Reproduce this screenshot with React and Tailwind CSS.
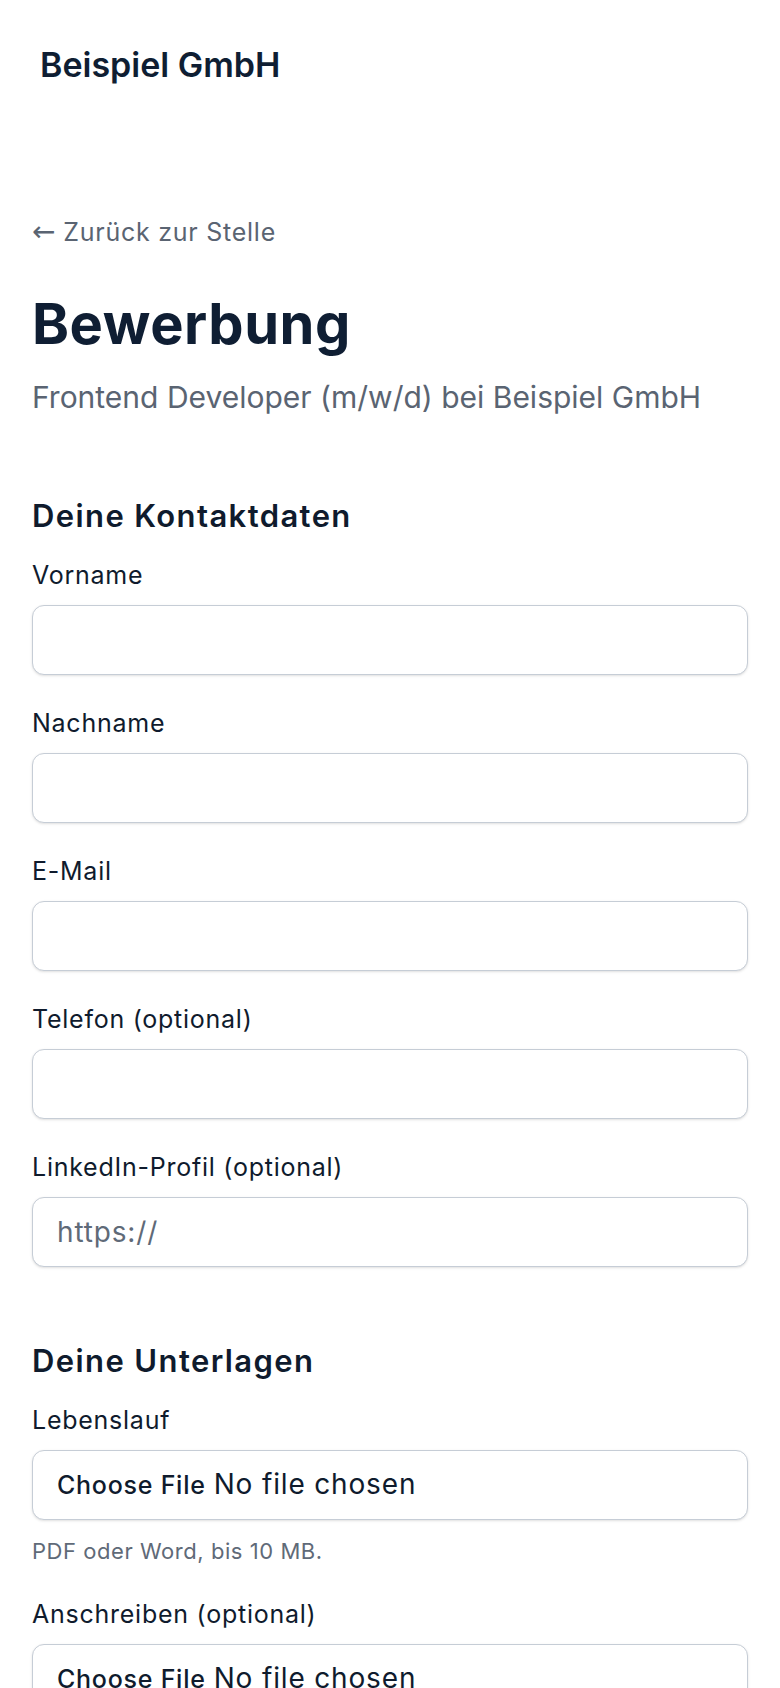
import React from "react";

const FIELDS = [
  { id: "vorname", label: "Vorname", type: "text" },
  { id: "nachname", label: "Nachname", type: "text" },
  { id: "email", label: "E-Mail", type: "email" },
  { id: "telefon", label: "Telefon (optional)", type: "tel" },
  { id: "linkedin", label: "LinkedIn-Profil (optional)", type: "url", placeholder: "https://" },
];

function Field({ id, label, type, placeholder }) {
  return (
    <div className="flex flex-col">
      <label htmlFor={id} className="text-[25px] leading-[36px] tracking-[0.03em] text-[#0f1b2d]">
        {label}
      </label>
      <input
        id={id}
        type={type}
        placeholder={placeholder}
        className="mt-3 h-[70px] w-full rounded-[12px] border-[1.5px] border-[#c6cdd6] bg-white px-6 text-[28px] tracking-[0.03em] text-[#0f1b2d] shadow-sm placeholder:text-[#5f6a78] outline-none"
      />
    </div>
  );
}

function FileField({ id, label, hint }) {
  return (
    <div className="flex flex-col">
      <label htmlFor={id} className="text-[25px] leading-[36px] tracking-[0.03em] text-[#0f1b2d]">
        {label}
      </label>
      <input
        id={id}
        type="file"
        className="mt-3 h-[70px] w-full rounded-[12px] border-[1.5px] border-[#c6cdd6] bg-white px-6 py-[15px] text-[28px] leading-[37px] tracking-[0.03em] text-[#0f1b2d] shadow-sm file:mr-2 file:text-[25px] file:font-medium file:tracking-[0.03em] file:text-[#0f1b2d]"
      />
      {hint && (
        <p className="mt-4 text-[22px] leading-[30px] tracking-[0.025em] text-[#5f6a78]">{hint}</p>
      )}
    </div>
  );
}

export default function App() {
  return (
    <div className="min-h-screen bg-white font-['Inter',sans-serif] text-[#0f1b2d]">
      <header className="flex h-[130px] items-center px-10">
        <span className="text-[34px] font-semibold leading-[40px] text-[#0f1e33]">
          Beispiel GmbH
        </span>
      </header>

      <main className="px-8 pt-[84px] pb-16">
        <a href="#" className="block text-[25px] leading-[36px] tracking-[0.03em] text-[#5a6472]">
          <span className="font-['DejaVu_Sans',sans-serif] text-[28px] leading-none tracking-normal">←</span>{" "}
          Zurück zur Stelle
        </a>
        <h1 className="mt-[46px] text-[56px] font-bold leading-none tracking-[0.01em] text-[#0f1e33]">
          Bewerbung
        </h1>
        <p className="mt-[23px] text-[30px] leading-[45px] text-[#5a6472]">
          Frontend Developer (m/w/d) bei Beispiel GmbH
        </p>

        <form className="flex flex-col">
          <section className="mt-[75px]">
            <h2 className="text-[31px] font-semibold leading-[42px] tracking-[0.045em]">Deine Kontaktdaten</h2>
            <div className="mt-[20px] flex flex-col gap-[30px]">
              {FIELDS.map(f => (
                <Field key={f.id} {...f} />
              ))}
            </div>
          </section>

          <section className="mt-[73px]">
            <h2 className="text-[31px] font-semibold leading-[42px] tracking-[0.045em]">Deine Unterlagen</h2>
            <div className="mt-[20px] flex flex-col gap-[30px]">
              <FileField id="cv" label="Lebenslauf" hint="PDF oder Word, bis 10 MB." />
              <FileField id="anschreiben" label="Anschreiben (optional)" />
            </div>
          </section>

          <button
            type="submit"
            className="mt-12 h-[70px] w-full rounded-[12px] bg-[#0f1e33] text-[27px] font-semibold text-white"
          >
            Bewerbung absenden
          </button>
        </form>
      </main>
    </div>
  );
}
